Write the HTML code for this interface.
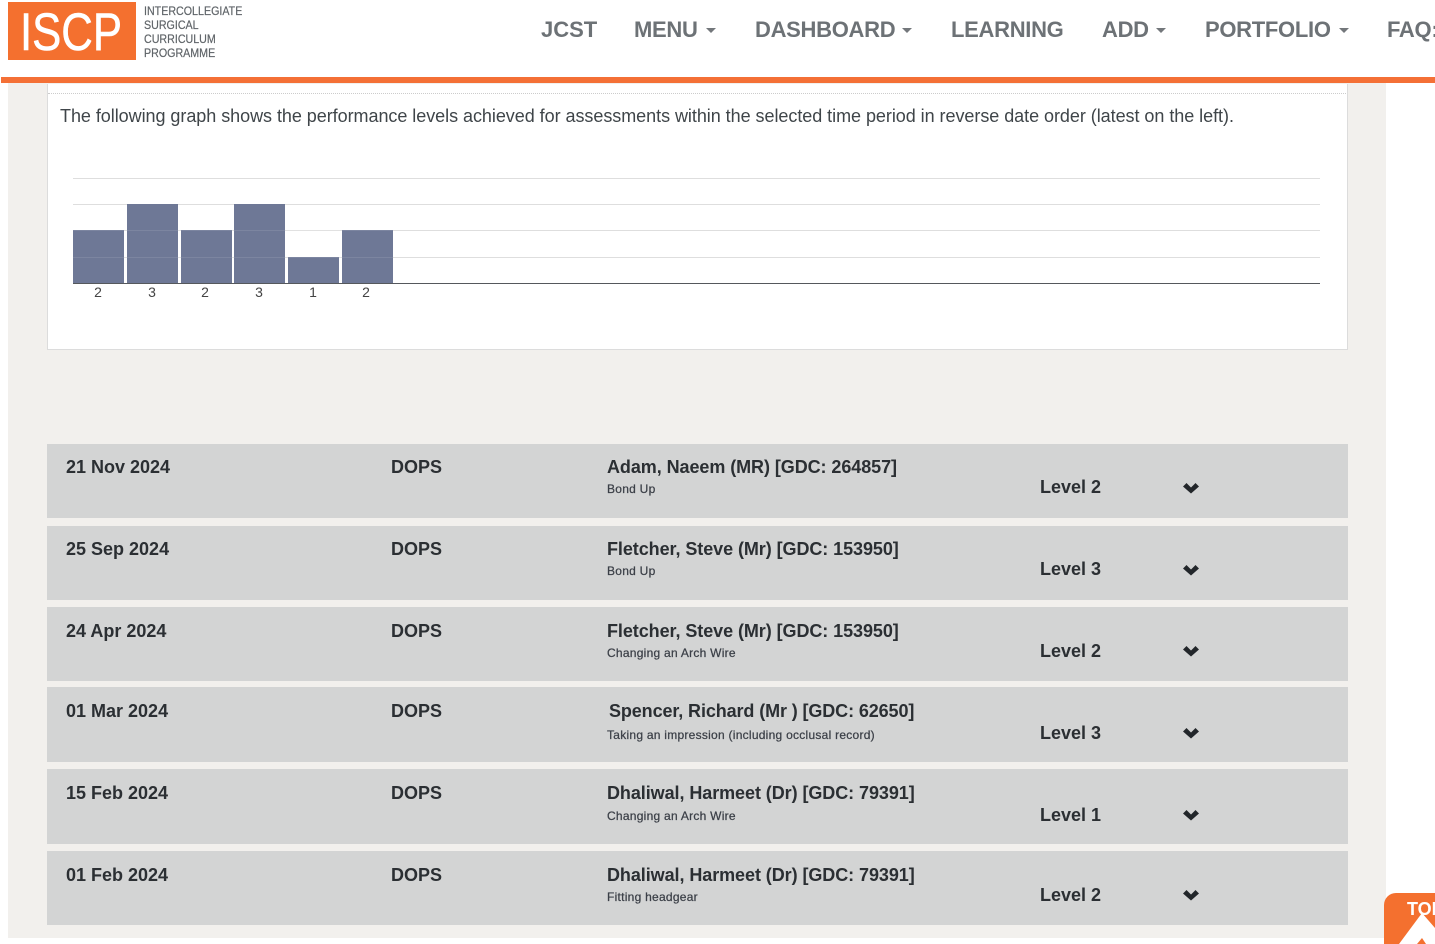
<!DOCTYPE html>
<html><head><meta charset="utf-8"><title>ISCP</title>
<style>
html,body{margin:0;padding:0;background:#fff;width:1435px;height:944px;overflow:hidden}
body{position:relative;font-family:"Liberation Sans",Arial,sans-serif;color:#2b2f33}
div,span,a{position:absolute;white-space:nowrap}
.bg{left:8px;top:83px;width:1378px;height:855px;background:#f2f0ed}
.panel{left:47px;top:84px;width:1299px;height:265px;background:#fff;border:1px solid #dcdcdc;border-top:0}
.dot{left:48px;top:93px;width:1298px;border-top:1px dotted #ccc}
.hdr{left:0;top:0;width:1435px;height:77px;background:#fff}
.bar{left:1px;top:77px;width:1434px;height:6px;background:#f47036}
.nav{top:16px;font-size:22px;line-height:28px;font-weight:bold;color:#6d7276;letter-spacing:-.3px}
.caret{width:0;height:0;border-left:5px solid transparent;border-right:5px solid transparent;border-top:5px solid #73777b;top:28px}
.lg{left:144px;font-size:12px;line-height:14px;color:#5f6468;transform:scaleX(.89);transform-origin:0 0;-webkit-text-stroke:.2px #5f6468}
.p{left:60px;top:105px;font-size:18px;line-height:22px;color:#3f4549;letter-spacing:-.045px}
.g{left:73px;width:1247px;height:1px;background:#dedede}
.b{width:51px;background:#6e7896}
.l{top:284px;font-size:14px;line-height:16px;color:#444;width:20px;text-align:center}
.r{left:47px;width:1301px;background:#d3d4d4}
.t{font-size:18px;line-height:20px;font-weight:bold;color:#2b2f33}
.n{letter-spacing:-.07px}
.s{left:607px;font-size:12px;line-height:14px;color:#3c4048;-webkit-text-stroke:.25px #3c4048;letter-spacing:.26px}
svg{position:absolute;overflow:visible}
</style></head><body>
<div class="bg"></div>
<div class="panel"></div>
<div class="dot"></div>
<div class="hdr"></div>
<div class="bar"></div>

<div style="left:8px;top:2px;width:128px;height:58px;background:#f4702f"></div>
<svg style="left:8px;top:2px" width="128" height="58"><text x="12" y="48" font-family="Liberation Sans" font-size="53" fill="#fff" stroke="#fff" stroke-width=".6" textLength="102" lengthAdjust="spacingAndGlyphs">ISCP</text></svg>
<div class="lg" style="top:4px">INTERCOLLEGIATE</div>
<div class="lg" style="top:18px">SURGICAL</div>
<div class="lg" style="top:32px">CURRICULUM</div>
<div class="lg" style="top:46px">PROGRAMME</div>

<a class="nav" style="left:541px;letter-spacing:0">JCST</a>
<a class="nav" style="left:634px">MENU</a><div class="caret" style="left:706px"></div>
<a class="nav" style="left:755px">DASHBOARD</a><div class="caret" style="left:902px"></div>
<a class="nav" style="left:951px">LEARNING</a>
<a class="nav" style="left:1102px">ADD</a><div class="caret" style="left:1156px"></div>
<a class="nav" style="left:1205px">PORTFOLIO</a><div class="caret" style="left:1339px"></div>
<a class="nav" style="left:1387px">FAQ:</a>

<div class="p">The following graph shows the performance levels achieved for assessments within the selected time period in reverse date order (latest on the left).</div>

<div class="g" style="top:178px"></div>
<div class="g" style="top:204px"></div>
<div class="g" style="top:230px"></div>
<div class="g" style="top:257px"></div>
<div class="b" style="left:73px;top:230px;height:53px"></div>
<div class="b" style="left:127px;top:204px;height:79px"></div>
<div class="b" style="left:181px;top:230px;height:53px"></div>
<div class="b" style="left:234px;top:204px;height:79px"></div>
<div class="b" style="left:288px;top:257px;height:26px"></div>
<div class="b" style="left:342px;top:230px;height:53px"></div>
<div class="g" style="top:230px;background:rgba(255,255,255,.1);width:320px"></div>
<div class="g" style="top:257px;background:rgba(255,255,255,.1);width:320px"></div>
<div class="g" style="top:283px;background:#55585c"></div>
<div class="l" style="left:88px">2</div>
<div class="l" style="left:142px">3</div>
<div class="l" style="left:195px">2</div>
<div class="l" style="left:249px">3</div>
<div class="l" style="left:303px">1</div>
<div class="l" style="left:356px">2</div>

<div class="r" style="top:444px;height:74px"></div>
<div class="r" style="top:526px;height:74px"></div>
<div class="r" style="top:607px;height:74px"></div>
<div class="r" style="top:687px;height:75px"></div>
<div class="r" style="top:769px;height:75px"></div>
<div class="r" style="top:851px;height:74px"></div>

<div class="t" style="left:66px;top:457px">21 Nov 2024</div>
<div class="t" style="left:391px;top:457px">DOPS</div>
<div class="t n" style="left:607px;top:457px">Adam, Naeem (MR) [GDC: 264857]</div>
<div class="s" style="top:482px">Bond Up</div>
<div class="t" style="left:1040px;top:477px">Level 2</div>

<div class="t" style="left:66px;top:539px">25 Sep 2024</div>
<div class="t" style="left:391px;top:539px">DOPS</div>
<div class="t n" style="left:607px;top:539px">Fletcher, Steve (Mr) [GDC: 153950]</div>
<div class="s" style="top:564px">Bond Up</div>
<div class="t" style="left:1040px;top:559px">Level 3</div>

<div class="t" style="left:66px;top:621px">24 Apr 2024</div>
<div class="t" style="left:391px;top:621px">DOPS</div>
<div class="t n" style="left:607px;top:621px">Fletcher, Steve (Mr) [GDC: 153950]</div>
<div class="s" style="top:646px">Changing an Arch Wire</div>
<div class="t" style="left:1040px;top:641px">Level 2</div>

<div class="t" style="left:66px;top:701px">01 Mar 2024</div>
<div class="t" style="left:391px;top:701px">DOPS</div>
<div class="t" style="left:609px;top:701px;letter-spacing:-.11px">Spencer, Richard (Mr ) [GDC: 62650]</div>
<div class="s" style="top:728px">Taking an impression (including occlusal record)</div>
<div class="t" style="left:1040px;top:723px">Level 3</div>

<div class="t" style="left:66px;top:783px">15 Feb 2024</div>
<div class="t" style="left:391px;top:783px">DOPS</div>
<div class="t n" style="left:607px;top:783px">Dhaliwal, Harmeet (Dr) [GDC: 79391]</div>
<div class="s" style="top:809px">Changing an Arch Wire</div>
<div class="t" style="left:1040px;top:805px">Level 1</div>

<div class="t" style="left:66px;top:865px">01 Feb 2024</div>
<div class="t" style="left:391px;top:865px">DOPS</div>
<div class="t n" style="left:607px;top:865px">Dhaliwal, Harmeet (Dr) [GDC: 79391]</div>
<div class="s" style="top:890px">Fitting headgear</div>
<div class="t" style="left:1040px;top:885px">Level 2</div>

<svg style="left:1183px;top:483px" width="16" height="11"><path d="M0 3.5 L3.5 0 L8 4.5 L12.5 0 L16 3.5 L8 10.5 Z" fill="#22262a"/></svg>
<svg style="left:1183px;top:565px" width="16" height="11"><path d="M0 3.5 L3.5 0 L8 4.5 L12.5 0 L16 3.5 L8 10.5 Z" fill="#22262a"/></svg>
<svg style="left:1183px;top:646px" width="16" height="11"><path d="M0 3.5 L3.5 0 L8 4.5 L12.5 0 L16 3.5 L8 10.5 Z" fill="#22262a"/></svg>
<svg style="left:1183px;top:728px" width="16" height="11"><path d="M0 3.5 L3.5 0 L8 4.5 L12.5 0 L16 3.5 L8 10.5 Z" fill="#22262a"/></svg>
<svg style="left:1183px;top:810px" width="16" height="11"><path d="M0 3.5 L3.5 0 L8 4.5 L12.5 0 L16 3.5 L8 10.5 Z" fill="#22262a"/></svg>
<svg style="left:1183px;top:890px" width="16" height="11"><path d="M0 3.5 L3.5 0 L8 4.5 L12.5 0 L16 3.5 L8 10.5 Z" fill="#22262a"/></svg>

<div style="left:1384px;top:893px;width:60px;height:60px;background:#f4702f;border-radius:12px 0 0 0"></div>
<svg style="left:1384px;top:893px" width="51" height="51"><path d="M38 20 L15 51 L51 51 L51 35 Z" fill="#fff"/><path d="M33 51 L38 45 L42 51 Z" fill="#f4702f"/></svg>
<div style="left:1407px;top:899px;font-size:18px;line-height:20px;font-weight:bold;color:#fff">TOP</div>
</body></html>
